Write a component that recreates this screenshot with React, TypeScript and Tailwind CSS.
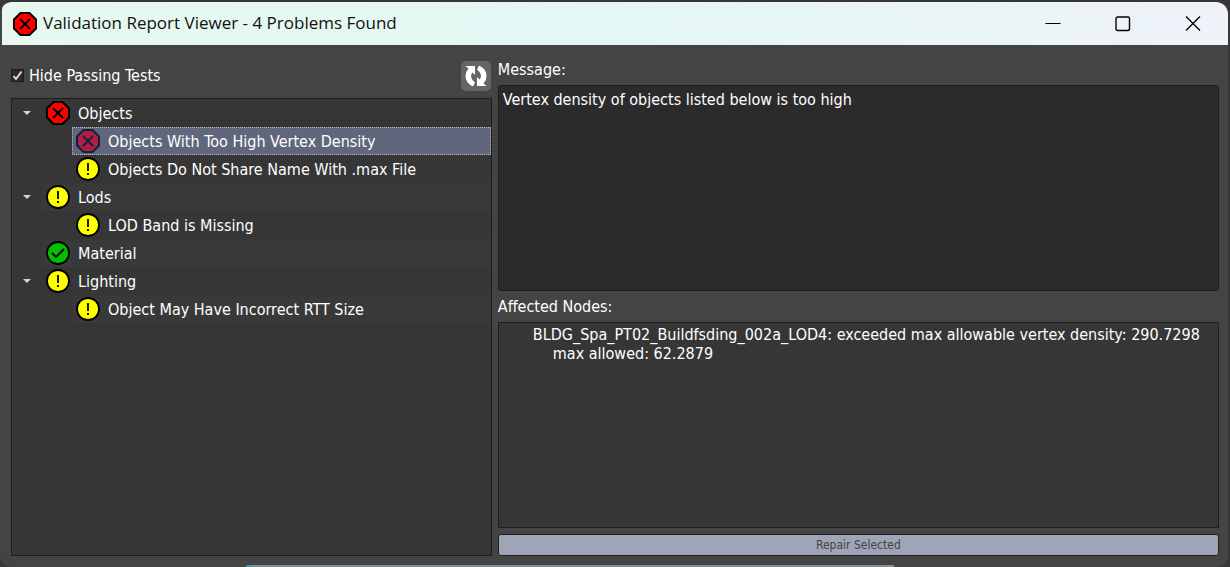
import React, { useState } from "react";

type Status = "error" | "warn" | "ok";

function StatusIcon({ status, dim = false }: { status: Status; dim?: boolean }) {
  if (status === "error") {
    const ink = dim ? "#0b2342" : "#000";
    return (
      <svg viewBox="0 0 24 24" className="size-6 shrink-0" aria-hidden="true">
        <path d="M7.5 1h9L23 7.5v9L16.5 23h-9L1 16.5v-9z" fill={dim ? "#b01e42" : "#ff0000"} stroke={ink} strokeWidth="2" />
        <path d="M7.5 7.5l9 9M16.5 7.5l-9 9" stroke={ink} strokeWidth="1.8" strokeLinecap="round" />
      </svg>
    );
  }
  if (status === "ok") {
    return (
      <svg viewBox="0 0 24 24" className="size-6 shrink-0" aria-hidden="true">
        <circle cx="12" cy="12" r="11" fill="#00be00" stroke="#000" strokeWidth="1.8" />
        <path d="M6 12l4 4 8-8" fill="none" stroke="#000" strokeWidth="1.8" />
      </svg>
    );
  }
  return (
    <svg viewBox="0 0 24 24" className="size-6 shrink-0" aria-hidden="true">
      <circle cx="12" cy="12" r="11" fill="#ffff00" stroke="#000" strokeWidth="1.8" />
      <path d="M12 6v8M12 16v2" stroke="#000" strokeWidth="1.8" />
    </svg>
  );
}

type Item = { label: string; status: Status; child?: boolean; group?: boolean };

const items: Item[] = [
  { label: "Objects", status: "error", group: true },
  { label: "Objects With Too High Vertex Density", status: "error", child: true },
  { label: "Objects Do Not Share Name With .max File", status: "warn", child: true },
  { label: "Lods", status: "warn", group: true },
  { label: "LOD Band is Missing", status: "warn", child: true },
  { label: "Material", status: "ok" },
  { label: "Lighting", status: "warn", group: true },
  { label: "Object May Have Incorrect RTT Size", status: "warn", child: true },
];

export default function App() {
  const [hide, setHide] = useState(true);
  const [selected, setSelected] = useState(1);
  return (
    <div className="flex h-screen flex-col overflow-hidden bg-[#383636] pt-0.5 font-['DejaVu_Sans_Condensed','DejaVu_Sans',sans-serif] text-[16px] leading-5 text-white">
      <div className="mr-0.5 flex min-h-0 flex-1 flex-col overflow-hidden rounded-xl bg-[#444444]">
        <header className="ml-0.5 flex h-[43px] shrink-0 items-center rounded-tl-lg bg-linear-to-r from-[#e6f8ef] via-[#e4f7f5] to-[#eef3f9] pl-[11px] font-['Open_Sans',sans-serif] text-[17px] text-[#111]">
          <StatusIcon status="error" />
          <h1 className="ml-1.5 flex-1 pb-0.5">Validation Report Viewer - 4 Problems Found</h1>
          <button aria-label="Minimize" className="flex h-full w-[70px] items-center justify-center">
            <svg viewBox="0 0 16 16" className="size-4" stroke="#000" fill="none"><path d="M.5 7.5h15" /></svg>
          </button>
          <button aria-label="Maximize" className="flex h-full w-[70px] items-center justify-center">
            <svg viewBox="0 0 16 16" className="size-4" stroke="#000" strokeWidth="1.4" fill="none"><rect x="1" y="1" width="13.5" height="13.5" rx="1.5" /></svg>
          </button>
          <button aria-label="Close" className="flex h-full w-[70px] items-center justify-center">
            <svg viewBox="0 0 16 16" className="size-4" stroke="#000" strokeWidth="1.3" fill="none"><path d="M1 .5l14 14M15 .5L1 14.500" /></svg>
          </button>
        </header>

        <main className="grid min-h-0 flex-1 grid-cols-[2fr_3fr] gap-1.5 pt-[15px] pr-[9px] pb-[9px] pl-[11px]">
          <section className="flex min-h-0 min-w-0 flex-col">
            <div className="flex h-[38px] shrink-0 items-start justify-between">
              <label className="flex h-[31px] items-center gap-[5px]">
                <span className="relative flex size-[13px]">
                  <input type="checkbox" checked={hide} onChange={(e) => setHide(e.target.checked)} className="peer size-[13px] appearance-none border border-[#1c1c1c] bg-[#2b2b2b]" />
                  <svg viewBox="0 0 13 13" className="pointer-events-none absolute inset-0 hidden peer-checked:block" fill="none" stroke="#e4e4e4" strokeWidth="1.8"><path d="M2.5 7l2.500 3 5.500-7.500" /></svg>
                </span>
                Hide Passing Tests
              </label>
              <button aria-label="Refresh" className="mt-px mr-px flex size-[30px] items-center justify-center rounded-[5px] bg-[#656565]">
                <svg viewBox="0 0 24 24" className="size-6" fill="#fff" aria-hidden="true">
                  <path d="M1.500 2h9.500v9L8.500 8.500Q5.500 12 8.500 16L11 18.500 9 22.500Q1.500 19 1.500 12Q1.500 8 4.500 4.500z" />
                  <path d="M22.500 22h-9.500v-9l2.500 2.500Q18.500 12 15.500 8L13 5.500 15 1.500Q22.500 5 22.500 12Q22.500 16 19.500 19.500z" />
                </svg>
              </button>
            </div>
            <ul className="min-h-0 flex-1 overflow-hidden border border-[#1e1e1e] bg-[#363636]">
              {items.map((it, i) => (
                <li key={it.label} className="flex h-7">
                  <span className={it.child ? "w-[60px] shrink-0" : "flex w-[30px] shrink-0 items-center justify-center"}>
                    {it.group && <svg viewBox="0 0 8 4" className="h-1 w-2" fill="#d4d4d4"><path d="M0 0h8L4 4z" /></svg>}
                  </span>
                  <button
                    onClick={() => setSelected(i)}
                    className={
                      "flex min-w-0 flex-1 items-center gap-2 pl-1 text-left whitespace-nowrap " +
                      (selected === i ? "bg-[#60667c] outline-1 -outline-offset-1 outline-dotted outline-[#b5b8c4]" : i % 2 ? "bg-[#393939]" : "")
                    }
                  >
                    <StatusIcon status={it.status} dim={selected === i} />
                    <span className="pt-0.5">{it.label}</span>
                  </button>
                </li>
              ))}
            </ul>
          </section>

          <section className="grid min-h-0 min-w-0 grid-rows-[auto_minmax(0,1fr)_auto_minmax(0,1fr)_auto]">
            <label htmlFor="message" className="mb-[5px]">Message:</label>
            <textarea id="message" readOnly defaultValue="Vertex density of objects listed below is too high" className="resize-none rounded-[3px] border border-[#1e1e1e] bg-[#2b2b2b] p-1 outline-none" />
            <h2 className="mt-1.5 mb-[5px]">Affected Nodes:</h2>
            <ul className="overflow-hidden border border-[#1e1e1e] bg-[#363636] pt-0.5 pl-[34px] leading-[19px]">
              <li className="whitespace-nowrap">
                BLDG_Spa_PT02_Buildfsding_002a_LOD4: exceeded max allowable vertex density: 290.7298
                <span className="block pl-5">max allowed: 62.2879</span>
              </li>
            </ul>
            <button className="mt-1.5 h-[22px] rounded-[3px] border border-[#1e1e1e] bg-[#a0a4b8] text-xs text-[#444]">Repair Selected</button>
          </section>
        </main>
        <div className="flex h-0.5 shrink-0 pl-[20%]">
          <div className="w-[66%] bg-linear-to-r from-[#2f9c98] via-[#849090] via-2% to-[#849090]" />
        </div>
      </div>
    </div>
  );
}
